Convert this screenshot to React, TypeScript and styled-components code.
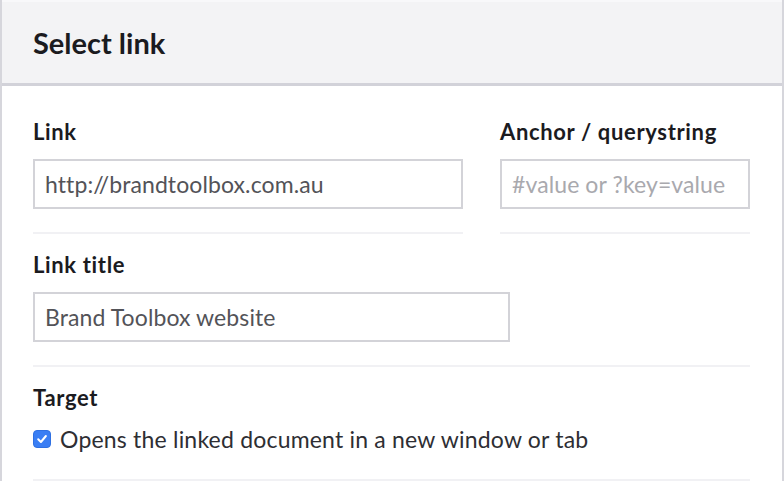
import React from "react";
import styled, { createGlobalStyle } from "styled-components";

const Global = createGlobalStyle`
  html, body { margin: 0; padding: 0; background: #ffffff; }
  body { font-family: Lato, "Open Sans", sans-serif; color: #1b1b1f; }
  * { box-sizing: border-box; }
`;

const Panel = styled.div`
  width: 784px;
  height: 481px;
  border-left: 2px solid #d6d6dc;
  border-right: 2px solid #d6d6dc;
  background: #ffffff;
  overflow: hidden;
`;

const Header = styled.header`
  height: 86px;
  background: #f3f3f5;
  border-top: 2px solid #f8f8fa;
  border-bottom: 3px solid #d2d2d9;
  display: flex;
  align-items: center;
  padding: 0 0 1px 31px;
`;

const Title = styled.h1`
  margin: 0;
  font-size: 29px;
  font-weight: 700;
  color: #1b1b1f;
`;

const Body = styled.div`
  padding: 15px 32px 0 31px;
`;

const Row = styled.div`
  display: flex;
  gap: 37px;
`;

const Group = styled.div<{ $width?: number; $bottom?: number }>`
  flex: ${(p) => (p.$width ? `0 0 ${p.$width}px` : "1 1 auto")};
  padding: 18px 0 ${(p) => p.$bottom ?? 23}px;
  border-bottom: 2px solid #f1f1f4;
`;

const Label = styled.label`
  display: block;
  font-size: 22px;
  font-weight: 700;
  letter-spacing: 0.65px;
  color: #1b1b1f;
  line-height: 26px;
  margin-bottom: 14px;
`;

const Input = styled.input<{ $width?: number }>`
  display: block;
  width: ${(p) => (p.$width ? `${p.$width}px` : "100%")};
  height: 50px;
  border: 2px solid #d3d3d8;
  border-radius: 0;
  padding: 0 10px;
  font-family: Lato, "Open Sans", sans-serif;
  font-size: 23px;
  letter-spacing: 0.1px;
  color: #535358;
  background: #ffffff;
  outline: none;
  &::placeholder { color: #a9a9ae; }
`;

const CheckRow = styled.label`
  display: flex;
  align-items: center;
  gap: 9px;
  height: 28px;
  font-size: 23px;
  letter-spacing: 0.2px;
  color: #2e2e33;
`;

const CheckBox = styled.span`
  width: 18px;
  height: 18px;
  flex: 0 0 18px;
  border-radius: 4px;
  background: #3a7ef4;
  border: 1px solid #2f70e2;
  display: flex;
  align-items: center;
  justify-content: center;
`;

export default function App() {
  return (
    <>
      <Global />
      <Panel>
        <Header>
          <Title>Select link</Title>
        </Header>
        <Body>
          <Row>
            <Group $width={430}>
              <Label>Link</Label>
              <Input defaultValue="http://brandtoolbox.com.au" />
            </Group>
            <Group $width={250}>
              <Label>Anchor / querystring</Label>
              <Input placeholder="#value or ?key=value" />
            </Group>
          </Row>
          <Group>
            <Label>Link title</Label>
            <Input $width={477} defaultValue="Brand Toolbox website" />
          </Group>
          <Group $bottom={26}>
            <Label>Target</Label>
            <CheckRow>
              <CheckBox role="checkbox" aria-checked="true">
                <svg width="12" height="12" viewBox="0 0 12 12">
                  <path d="M2.2 6.3 L4.9 9 L9.9 3" fill="none" stroke="#ffffff" strokeWidth="2" strokeLinecap="round" strokeLinejoin="round" />
                </svg>
              </CheckBox>
              Opens the linked document in a new window or tab
            </CheckRow>
          </Group>
        </Body>
      </Panel>
    </>
  );
}
